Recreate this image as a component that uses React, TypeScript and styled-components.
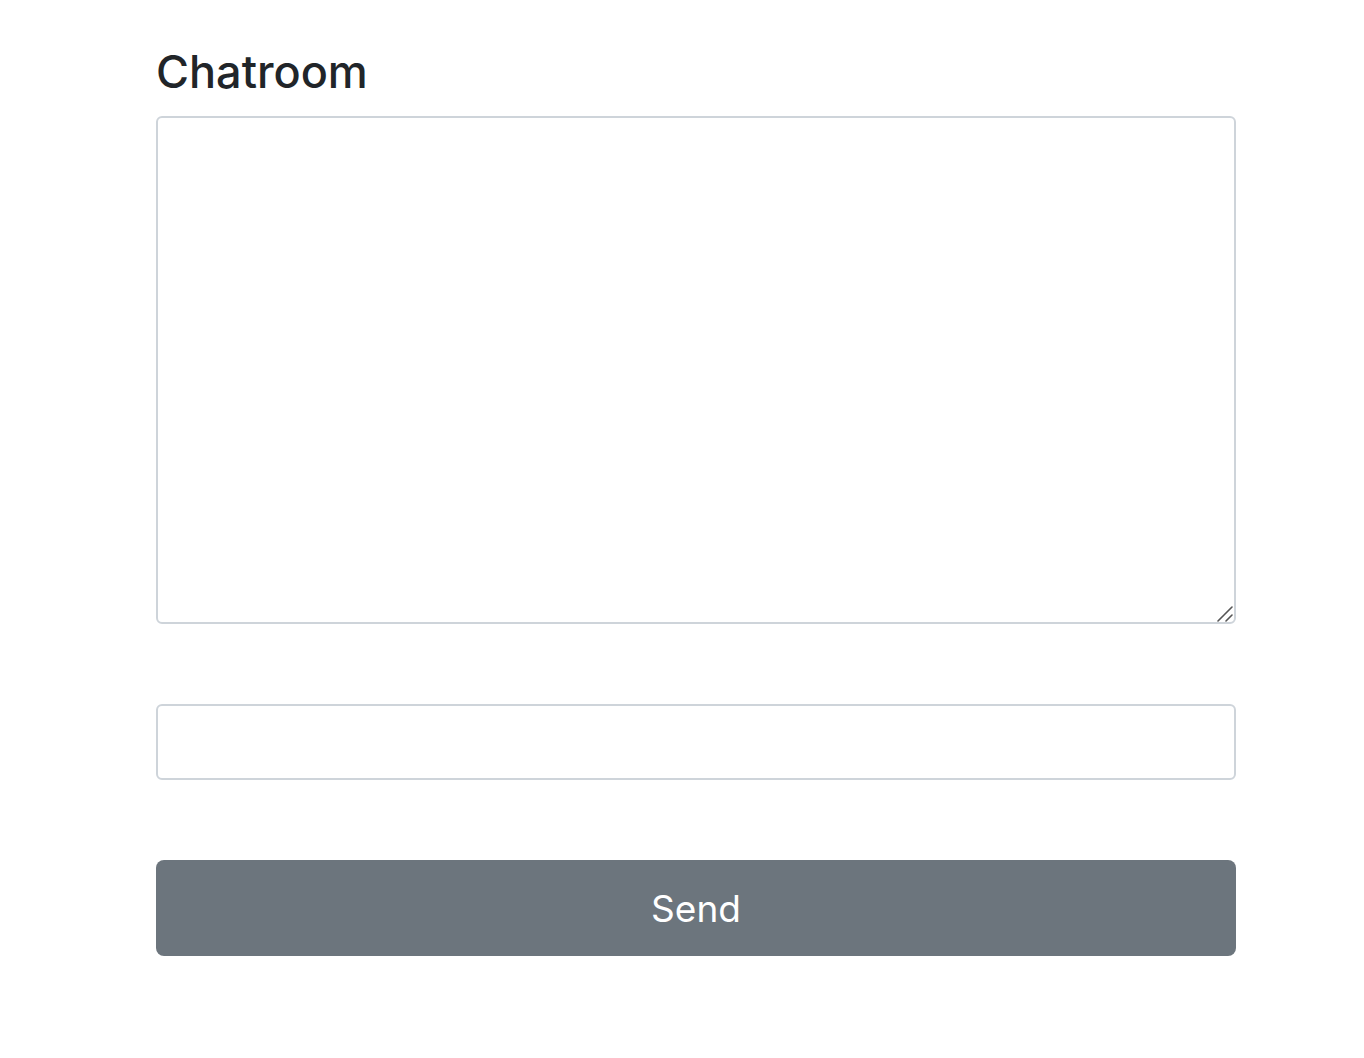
import styled, { createGlobalStyle } from 'styled-components'


const GlobalStyle = createGlobalStyle`
    body{
        margin: 0;
        background: #fff;
        font-family: Inter, "Noto Sans", "Liberation Sans", sans-serif;
        color: #212529;
    }
`

const Page = styled.div`
    width: 1080px;
    margin-left: 156px;
    padding-top: 45px;
    display: flex;
    flex-direction: column;
`

const Title = styled.h1`
    font-size: 45px;
    font-weight: 500;
    line-height: 54px;
    margin: 0 0 17px;
    color: #212529;
`

const LogWrap = styled.div`
    position: relative;
    height: 508px;

    .grip{
        position: absolute;
        right: 3px;
        bottom: 2px;
        pointer-events: none;
    }
`

const ChatLog = styled.textarea`
    box-sizing: border-box;
    display: block;
    width: 100%;
    height: 100%;
    border: 2px solid #ced4da;
    border-radius: 6px;
    padding: 12px 18px;
    font: inherit;
    font-size: 24px;
    resize: none;
    outline: none;
`

const MessageInput = styled.input`
    box-sizing: border-box;
    width: 100%;
    height: 76px;
    margin-top: 80px;
    border: 2px solid #ced4da;
    border-radius: 6px;
    padding: 0 18px;
    font: inherit;
    font-size: 24px;
    outline: none;
`

const SendButton = styled.button`
    box-sizing: border-box;
    width: 100%;
    height: 96px;
    margin-top: 80px;
    border: none;
    border-radius: 8px;
    background: #6c757d;
    color: #fff;
    font-family: inherit;
    font-size: 37px;
    font-weight: 400;
    cursor: pointer;
`


const App = ()=>{
    return(
        <>
            <GlobalStyle />
            <Page>
                <Title>Chatroom</Title>
                <LogWrap>
                    <ChatLog readOnly />
                    <svg className="grip" width="16" height="16" viewBox="0 0 16 16">
                        <path d="M1 15 L15 1 M9 15 L15 9" stroke="#555" strokeWidth="1.6" strokeLinecap="round" />
                    </svg>
                </LogWrap>
                <MessageInput type="text" />
                <SendButton>Send</SendButton>
            </Page>
        </>
    )
}

export default App
